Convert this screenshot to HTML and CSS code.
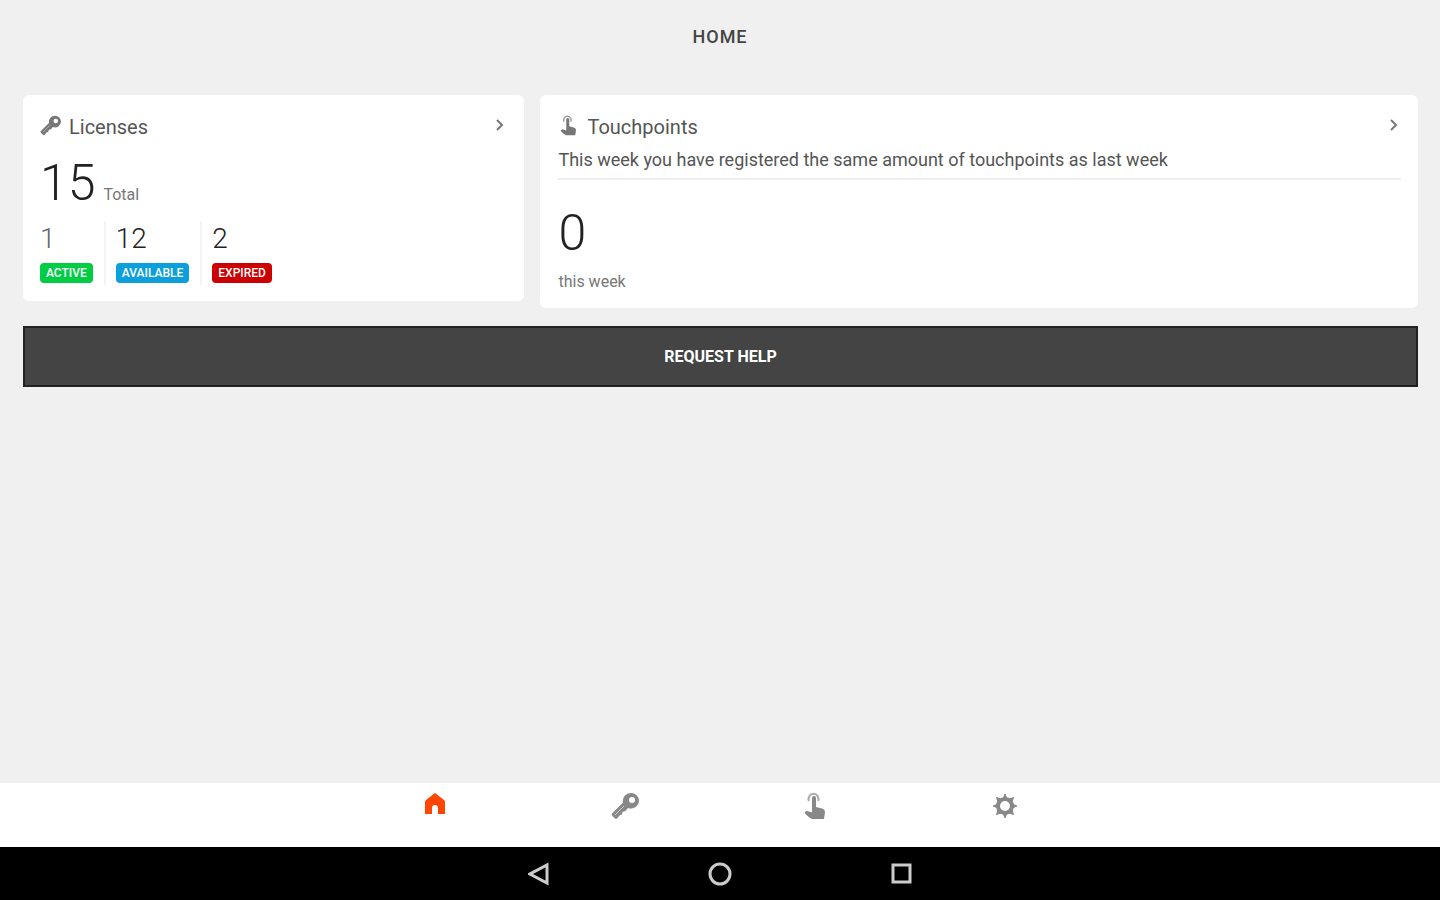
FILE: index.html
```html
<!DOCTYPE html>
<html lang="en">
<head>
    <meta charset="UTF-8">
    <meta name="viewport" content="width=device-width, initial-scale=1.0">
    <title>Home</title>
    <link rel="stylesheet" href="styles.css">
</head>
<body>
    <!-- Shared icons -->
    <svg class="icon-defs" aria-hidden="true">
        <symbol id="key" viewBox="0 0 28 28">
            <path fill="currentColor" fill-rule="evenodd" d="M20 1a8 8 0 0 0-8 9.500L1.500 21a2 2 0 0 0 0 3l2 2a2 2 0 0 0 3 0l2.500-3 2-.500.500-2.500 3-1 2.500-3A8 8 0 0 0 28 9a8 8 0 0 0-8-8zm1 4a3 3 0 1 1 0 6 3 3 0 0 1 0-6z"/>
            <path stroke="#fff" stroke-width="1" opacity=".6" d="M4 23l9-9"/>
        </symbol>
        <symbol id="touch" viewBox="0 0 22 28">
            <path fill="none" stroke="currentColor" stroke-width="2" opacity=".7" d="M5 9a5 5 0 1 1 9 0"/>
            <path fill="currentColor" d="M8 6a2 2 0 0 1 4 0v9l6 1.500q3 1 3 3.500l-1 7H8q-4-2-7-5.500Q.500 19 3 19l5 1.500z"/>
        </symbol>
        <symbol id="chevron" viewBox="0 0 10 14">
            <path fill="none" stroke="currentColor" stroke-width="2" d="M2 2l5 5-5 5"/>
        </symbol>
    </svg>

    <header class="top-bar">
        <h1>HOME</h1>
    </header>

    <main class="content">
        <div class="cards">
            <section class="card">
                <div class="card-header">
                    <svg class="card-icon"><use href="#key"/></svg>
                    <h2>Licenses</h2>
                    <a href="#" class="more" aria-label="Open licenses"><svg><use href="#chevron"/></svg></a>
                </div>
                <div class="total">
                    <span class="big">15</span>
                    <span class="small">Total</span>
                </div>
                <div class="stats">
                    <div class="stat">
                        <span class="count muted">1</span>
                        <span class="badge active">ACTIVE</span>
                    </div>
                    <div class="stat">
                        <span class="count">12</span>
                        <span class="badge available">AVAILABLE</span>
                    </div>
                    <div class="stat">
                        <span class="count">2</span>
                        <span class="badge expired">EXPIRED</span>
                    </div>
                </div>
            </section>

            <section class="card">
                <div class="card-header">
                    <svg class="card-icon"><use href="#touch"/></svg>
                    <h2>Touchpoints</h2>
                    <a href="#" class="more" aria-label="Open touchpoints"><svg><use href="#chevron"/></svg></a>
                </div>
                <p class="message">This week you have registered the same amount of touchpoints as last week</p>
                <div class="week">
                    <span class="big">0</span>
                    <span class="small">this week</span>
                </div>
            </section>
        </div>

        <button type="button" class="help">REQUEST HELP</button>
    </main>

    <nav class="tabs">
        <a href="#" class="selected" aria-label="Home">
            <svg width="22" height="24" viewBox="0 0 22 24"><path fill="currentColor" d="M11 1l9 7q1 1 1 2v12h-7v-6q0-3-3-3t-3 3v6H1V10q0-1 1-2z"/></svg>
        </a>
        <a href="#" aria-label="Licenses">
            <svg width="28" height="28"><use href="#key"/></svg>
        </a>
        <a href="#" aria-label="Touchpoints">
            <svg width="22" height="28"><use href="#touch"/></svg>
        </a>
        <a href="#" aria-label="Settings">
            <svg width="24" height="28" viewBox="0 0 24 28">
                <circle cx="12" cy="14" r="7" fill="none" stroke="currentColor" stroke-width="4"/>
                <path fill="currentColor" d="M10 7l2-5 2 5zM10 21l2 5 2-5zM5 12l-5 2 5 2zM19 12l5 2-5 2zM5 10L3.500 5.500 8 7zM19 10l1.500-4.500L16 7zM5 18l-1.500 4.500L8 21zM19 18l1.500 4.500L16 21z" stroke="currentColor"/>
            </svg>
        </a>
    </nav>

    <footer class="system-bar">
        <button type="button" aria-label="Back">
            <svg width="22" height="24" viewBox="0 0 22 24"><path d="M19 3v18L2 12z"/></svg>
        </button>
        <button type="button" aria-label="Home screen">
            <svg width="24" height="24" viewBox="0 0 24 24"><circle cx="12" cy="12" r="10"/></svg>
        </button>
        <button type="button" aria-label="Recent apps">
            <svg width="22" height="24" viewBox="0 0 22 24"><path d="M3 3h17v17H3z"/></svg>
        </button>
    </footer>
</body>
</html>
```
FILE: styles.css
```css
* {
    box-sizing: border-box;
}

body {
    margin: 0;
    min-height: 100vh;
    display: flex;
    flex-direction: column;
    background-color: #f0f0f0;
    color: #555;
    font-family: Roboto, Arial, sans-serif;
}

h1, h2, p {
    margin: 0;
}

svg {
    display: block;
}

.icon-defs {
    position: absolute;
    width: 0;
    height: 0;
}

.top-bar {
    padding: 26px 0 47px;
    text-align: center;
}

.top-bar h1 {
    font-size: 18px;
    line-height: 22px;
    font-weight: 500;
    letter-spacing: 1px;
    color: #444;
}

.content {
    flex: 1;
    padding: 0 22px 24px 23px;
}

.cards {
    display: grid;
    grid-template-columns: 4fr 7fr;
    gap: 16px;
    align-items: start;
}

.card {
    padding: 20px 17px 16px 18px;
    background-color: #fff;
    border-radius: 6px;
}

.card:first-child {
    padding-left: 17px;
}

.card-header {
    display: flex;
    height: 24px;
}

.card-header h2 {
    flex: 1;
    font-size: 20px;
    line-height: 24px;
    font-weight: 400;
}

.card-icon {
    width: 21px;
    height: 21px;
    margin-right: 8px;
    color: #777;
}

.more {
    padding: 3px 2px 0 0;
    color: #777;
}

.more svg {
    width: 10px;
    height: 14px;
}

.big {
    font-size: 50px;
    line-height: 56px;
    font-weight: 300;
    color: #222;
}

.small {
    font-size: 16px;
    line-height: 20px;
    font-weight: 400;
    color: #777;
}

.total {
    display: flex;
    align-items: baseline;
    gap: 8px;
    margin-top: 16px;
}

.stats {
    display: flex;
    margin-top: 10px;
}

.stat {
    display: flex;
    flex-direction: column;
    align-items: flex-start;
    gap: 7px;
    height: 64px;
    padding: 1px 11px 0 10px;
    border-right: 2px solid #f4f4f4;
}

.stat:first-child {
    padding-left: 0;
}

.stat:last-child {
    border-right: none;
}

.count {
    font-size: 28px;
    line-height: 34px;
    font-weight: 300;
    color: #222;
}

.count.muted {
    color: #666;
}

.badge {
    padding: 0 6px;
    border-radius: 4px;
    color: #fff;
    font-size: 12px;
    line-height: 20px;
    font-weight: 500;
}

.active {
    background-color: #00cc44;
}

.available {
    background-color: #0c9fdc;
}

.expired {
    background-color: #cc0000;
}

.message {
    padding: 10px 0 7px;
    border-bottom: 2px solid #eee;
    font-size: 18px;
    line-height: 22px;
}

.week {
    display: flex;
    flex-direction: column;
    gap: 11px;
    padding-top: 25px;
}

.help {
    display: block;
    width: 100%;
    margin-top: 18px;
    padding: 19px 18px 18px;
    border: 2px solid #222;
    background-color: #444;
    color: #fff;
    font-family: inherit;
    font-size: 16px;
    line-height: 20px;
    font-weight: 700;
}

.tabs {
    display: flex;
    justify-content: center;
    height: 64px;
    background-color: #fff;
}

.tabs a {
    width: 190px;
    padding-top: 9px;
    color: #888;
}

.tabs a svg {
    margin: 0 auto;
}

.tabs .selected {
    color: #ff4500;
}

.system-bar {
    display: flex;
    justify-content: center;
    height: 53px;
    background-color: #000;
}

.system-bar button {
    width: 181px;
    padding: 0;
    border: none;
    background: none;
}

.system-bar svg {
    margin: 0 auto;
    fill: none;
    stroke: #ccc;
    stroke-width: 3;
}
```
